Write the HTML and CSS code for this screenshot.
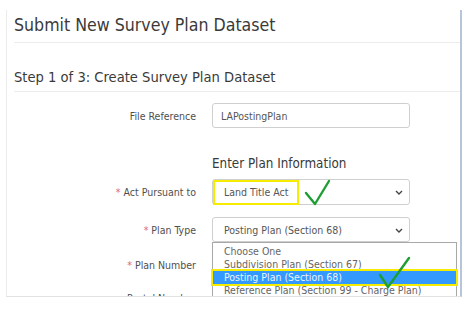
FILE: index.html
```html
<!DOCTYPE html>
<html lang="en">
<head>
  <meta charset="UTF-8">
  <title>Submit New Survey Plan Dataset</title>
  <link rel="stylesheet" href="styles.css">
</head>
<body>

<div class="frame">
  <h1 class="title">Submit New Survey Plan Dataset</h1>
  <h2 class="step">Step 1 of 3: Create Survey Plan Dataset</h2>

  <div class="row">
    <label class="label">File Reference</label>
    <div class="field">LAPostingPlan</div>
  </div>

  <div class="row section">
    <div class="label"></div>
    <h3 class="section-title">Enter Plan Information</h3>
  </div>

  <div class="row act">
    <label class="label"><span class="req">*</span> Act Pursuant to</label>
    <div class="field select">
      <span class="marked">Land Title Act</span>
      <svg class="chevron" width="8" height="5" viewBox="0 0 8 5"><polyline points="1,1 4,4 7,1" fill="none" stroke="#444" stroke-width="1.4"/></svg>
    </div>
  </div>

  <div class="row">
    <label class="label"><span class="req">*</span> Plan Type</label>
    <div class="field select open">
      <span>Posting Plan (Section 68)</span>
      <svg class="chevron" width="8" height="5" viewBox="0 0 8 5"><polyline points="1,1 4,4 7,1" fill="none" stroke="#444" stroke-width="1.4"/></svg>
      <ul class="dropdown">
        <li>Choose One</li>
        <li>Subdivision Plan (Section 67)</li>
        <li class="picked">Posting Plan (Section 68)</li>
        <li>Reference Plan (Section 99 - Charge Plan)</li>
      </ul>
    </div>
  </div>

  <div class="row tight">
    <label class="label"><span class="req">*</span> Plan Number</label>
    <div class="field"></div>
  </div>

  <div class="row last">
    <label class="label">Postal Number</label>
    <div class="field"></div>
  </div>
</div>

<!-- hand drawn ticks over the screenshot -->
<svg class="ticks" width="473" height="309" viewBox="0 0 473 309">
  <polyline points="306,193 315,204 329,181" fill="none" stroke="#1e9e35" stroke-width="2.4" stroke-linecap="round" stroke-linejoin="round"/>
  <polyline points="380,275 388,287 409,258" fill="none" stroke="#1e9e35" stroke-width="2.4" stroke-linecap="round" stroke-linejoin="round"/>
</svg>

</body>
</html>
```

FILE: styles.css
```css
body {
  margin: 0;
  background: #fff;
  font-family: "DejaVu Sans Condensed", "DejaVu Sans", sans-serif;
  color: #444;
  position: relative;
  height: 309px;
  overflow: hidden;
}
.frame {
  margin: 10px 0 0 6px;
  width: 453px;
  height: 286px;
  border-left: 1px solid #ececec;
  border-right: 2px solid #b7c5d8;
  border-bottom: 1px solid #e2e2e2;
  overflow: hidden;
}
.title {
  margin: 0 0 0 7px;
  padding: 4px 0 6px;
  font-size: 17.6px;
  line-height: 22px;
  font-weight: normal;
  color: #3a3a3a;
  border-bottom: 1px solid #ececec;
}
.step {
  margin: 25px 0 0 7px;
  padding: 0 0 5px;
  font-size: 14.6px;
  line-height: 18px;
  font-weight: normal;
  color: #3a3a3a;
  border-bottom: 1px solid #ececec;
}
.row {
  display: flex;
  align-items: center;
  margin-top: 12px;
}
.row:first-of-type {
  margin-top: 11px;
}
.label {
  width: 189px;
  margin-right: 16px;
  text-align: right;
  font-size: 10.5px;
  color: #4f4f4f;
  flex-shrink: 0;
}
.req {
  color: #e0676a;
}
.field {
  position: relative;
  box-sizing: border-box;
  width: 198px;
  height: 25px;
  border: 1px solid #cfcfcf;
  border-radius: 3px;
  padding-left: 8px;
  display: flex;
  align-items: center;
  font-size: 10.5px;
  color: #555;
}
.section {
  margin-top: 27px;
}
.section-title {
  margin: 0;
  font-size: 13.3px;
  line-height: 18px;
  font-weight: normal;
  color: #3a3a3a;
}
.act {
  margin-top: 6px;
}
.act .field {
  height: 26px;
  padding-left: 0;
  align-items: flex-start;
}
.select {
  padding-left: 11px;
}
.chevron {
  position: absolute;
  right: 6px;
  top: 10px;
}
.marked {
  border: 2px solid #f6ec00;
  padding: 4px 9px 4px 9px;
  line-height: 13px;
}
.dropdown {
  position: absolute;
  top: 24px;
  left: -1px;
  width: 245px;
  height: 60px;
  box-sizing: border-box;
  margin: 0;
  padding: 2px 0 0;
  list-style: none;
  background: #fff;
  border: 1px solid #a8a8a8;
  z-index: 2;
}
.dropdown li {
  padding-left: 11px;
  line-height: 13px;
  height: 13px;
  font-size: 10.5px;
  color: #666;
  white-space: nowrap;
}
.dropdown .picked {
  background: #3399ff;
  color: #eaf3ff;
  outline: 2px solid #f6ec00;
}
.tight {
  margin-top: 10px;
}
.last {
  margin-top: 8px;
}
.ticks {
  position: absolute;
  top: 0;
  left: 0;
  pointer-events: none;
  z-index: 5;
}
```
